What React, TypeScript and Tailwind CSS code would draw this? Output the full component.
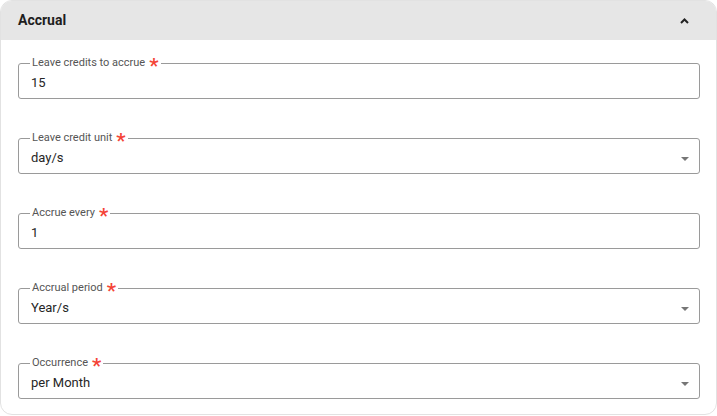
import React from "react";

type Field = { label: string; value: string; select?: boolean };

const FIELDS: Field[] = [
  { label: "Leave credits to accrue", value: "15" },
  { label: "Leave credit unit", value: "day/s", select: true },
  { label: "Accrue every", value: "1" },
  { label: "Accrual period", value: "Year/s", select: true },
  { label: "Occurrence", value: "per Month", select: true },
];

function OutlinedField({ field }: { field: Field }) {
  return (
    <fieldset className="border border-[#9a9a9a] rounded-[3px] px-3 m-0 min-w-0">
      <legend className="px-[2px] ml-[-1px] h-[12px] text-[11px] leading-[12px] text-[#555] flex items-center">
        {field.label}
        <span className="ml-[4px] text-[21px] font-medium leading-none text-[#f44336] relative top-[3px]">*</span>
      </legend>
      <div className="h-[29px] flex items-center justify-between">
        <span className="text-[13px] text-[#262626] relative top-[-1px]">{field.value}</span>
        {field.select && (
          <svg width="8" height="4" viewBox="0 0 8 4" className="mr-[-2px]">
            <path d="M0 0 L8 0 L4 4 Z" fill="#767676" />
          </svg>
        )}
      </div>
    </fieldset>
  );
}

export default function App() {
  return (
    <div className="w-[717px] h-[416px] bg-white" style={{ fontFamily: "Roboto, 'Liberation Sans', sans-serif" }}>
      <div className="h-[415px] border border-[#e2e2e2] rounded-[12px] overflow-hidden flex flex-col">
        <div className="h-[39px] bg-[#e6e6e6] flex items-center justify-between pl-[17px] pr-[27px]">
          <span className="text-[14px] font-bold text-[#1e1e1e]">Accrual</span>
          <svg width="9" height="6" viewBox="0 0 9 6">
            <path d="M1 5 L4.5 1.5 L8 5" fill="none" stroke="#222" strokeWidth="2" />
          </svg>
        </div>
        <div className="flex flex-col gap-[33px] pt-[17px] pl-[17px] pr-[16px]">
          {FIELDS.map((f) => (
            <OutlinedField key={f.label} field={f} />
          ))}
        </div>
      </div>
    </div>
  );
}
